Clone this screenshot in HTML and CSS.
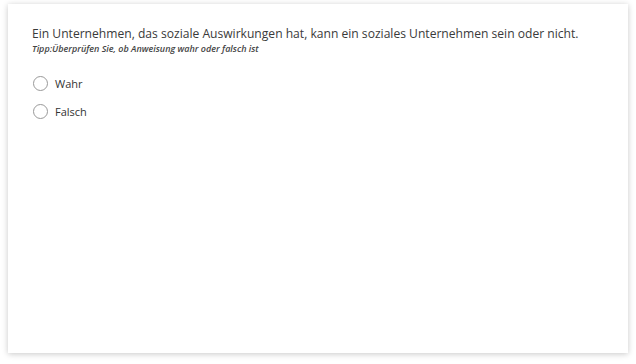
FILE: index.html
```html
<!DOCTYPE html>
<html lang="de">
<head>
    <meta charset="UTF-8">
    <meta name="viewport" content="width=device-width, initial-scale=1.0">
    <title>Wahr oder falsch</title>
    <link rel="stylesheet" href="styles.css">
</head>
<body>

<div class="card">
    <div class="question">Ein Unternehmen, das soziale Auswirkungen hat, kann ein soziales Unternehmen sein oder nicht.</div>
    <div class="hint">Tipp:Überprüfen Sie, ob Anweisung wahr oder falsch ist</div>

    <div class="options">
        <label class="option">
            <input type="radio" name="answer" value="wahr">
            <span class="radio"></span>
            <span class="option-text">Wahr</span>
        </label>
        <label class="option">
            <input type="radio" name="answer" value="falsch">
            <span class="radio"></span>
            <span class="option-text">Falsch</span>
        </label>
    </div>
</div>

</body>
</html>
```

FILE: styles.css
```css
body {
    font-family: "Open Sans", Arial, sans-serif;
    background-color: #fff;
    margin: 0;
    padding: 4px 8px 11px 8px;
    height: 364px;
    box-sizing: border-box;
}
.card {
    background-color: #fff;
    height: 100%;
    box-sizing: border-box;
    padding: 22px 24px;
    box-shadow: 0 1px 6px rgba(0, 0, 0, 0.22);
}
.question {
    font-size: 12.1px;
    line-height: 16px;
    color: #3a3a3a;
}
.hint {
    font-size: 9px;
    line-height: 12px;
    margin-top: 1px;
    font-style: italic;
    font-weight: 600;
    color: #444;
}
.options {
    margin-top: 14px;
}
.option {
    display: flex;
    align-items: center;
    height: 28px;
    cursor: pointer;
}
.option input {
    display: none;
}
.radio {
    width: 13px;
    height: 13px;
    border: 1.5px solid #999;
    border-radius: 50%;
    margin-left: 1px;
    margin-right: 7px;
}
.option-text {
    font-size: 11px;
    color: #333;
}
```
